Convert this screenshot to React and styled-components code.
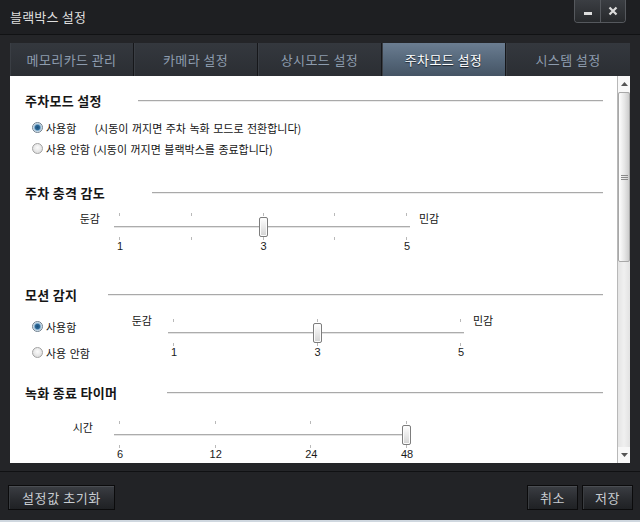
import React from 'react';
import styled, { createGlobalStyle } from 'styled-components';

const Global = createGlobalStyle`
  html, body { margin: 0; padding: 0; background: #242528; }
  body { font-family: "Noto Sans CJK KR", "Noto Sans", sans-serif; }
  #root { width: 640px; height: 522px; }
  * { box-sizing: border-box; }
`;

const Window = styled.div`
  width: 640px;
  height: 522px;
  display: flex;
  flex-direction: column;
  background: #242528;
  overflow: hidden;
`;

const TitleBar = styled.div`
  height: 35px;
  flex: none;
  display: flex;
  align-items: flex-start;
  justify-content: space-between;
  padding: 0 14px 0 10px;
  background: #1e1f22;
  border-bottom: 1px solid #111214;
`;

const Title = styled.div`
  line-height: 33px;
  font-size: 13px;
  color: #dedede;
  letter-spacing: 0.2px;
`;

const WinButtons = styled.div`
  display: flex;
  height: 23px;
  border: 1px solid #55585d;
  border-top: none;
  border-radius: 0 0 4px 4px;
  overflow: hidden;
`;

const WinButton = styled.div`
  width: 25px;
  height: 22px;
  display: flex;
  align-items: center;
  justify-content: center;
  background: linear-gradient(#3b3e43, #27292c);
  border-left: ${p => (p.$first ? 'none' : '1px solid #55585d')};
`;

const Body = styled.div`
  flex: none;
  padding: 8px 10px 8px 10px;
  display: flex;
  flex-direction: column;
`;

const TabBar = styled.div`
  display: grid;
  grid-template-columns: repeat(5, 1fr);
  height: 33px;
`;

const Tab = styled.div`
  display: flex;
  align-items: center;
  justify-content: center;
  font-size: 13px;
  letter-spacing: 0.4px;
  border-right: 1px solid #16171a;
  box-shadow: inset 1px 0 0 #3a3e44;
  color: ${p => (p.$active ? '#ffffff' : '#8d9cae')};
  text-shadow: ${p => (p.$active ? '0 1px 1px #1b232c' : 'none')};
  background: ${p =>
    p.$active
      ? 'linear-gradient(#6b7d91, #56687b 50%, #455464)'
      : 'linear-gradient(#34383e, #2b2e33)'};
  &:last-child { border-right: none; }
`;

const Panel = styled.div`
  height: 387px;
  display: flex;
  background: #ffffff;
`;

const Content = styled.div`
  flex: 1;
  overflow: hidden;
  padding: 15px 14px 0 15px;
  color: #151515;
`;

const Heading = styled.div`
  display: grid;
  grid-template-columns: ${p => p.$col}px 1fr;
  align-items: center;
  height: 18px;
  margin-top: ${p => p.$mt || 0}px;
`;

const HeadingText = styled.span`
  font-size: 13px;
  font-weight: 700;
  color: #161616;
  letter-spacing: 0.3px;
  white-space: nowrap;
`;

const Rule = styled.div`
  height: 2px;
  border-top: 1px solid #a9a9a9;
  border-bottom: 1px solid #ececec;
`;

const RadioGroup = styled.div`
  display: flex;
  flex-direction: column;
  gap: ${p => p.$gap || 0}px;
  margin-top: ${p => p.$mt || 0}px;
  width: ${p => (p.$width ? `${p.$width}px` : 'auto')};
  flex: none;
`;

const RadioRow = styled.div`
  display: flex;
  align-items: center;
  height: 21px;
  padding-left: 7px;
  font-size: 11px;
  word-spacing: 1px;
  white-space: nowrap;
`;

const RadioDot = styled.span`
  width: 11px;
  height: 11px;
  flex: none;
  border-radius: 50%;
  border: 1px solid ${p => (p.$on ? '#6e7f8e' : '#a2a2a2')};
  margin-right: 3px;
  background: ${p =>
    p.$on
      ? 'radial-gradient(circle, #1d4f7a 0, #2c6896 2.2px, #8fb6d3 3.2px, #e9f0f6 4.5px)'
      : 'radial-gradient(circle at 50% 40%, #fbfbfb, #d5d5d5)'};
`;

const Desc = styled.span`
  margin-left: ${p => p.$gap}px;
`;

const MotionRow = styled.div`
  display: flex;
  align-items: flex-start;
  margin-top: 13px;
`;

const SliderRow = styled.div`
  display: flex;
  align-items: flex-start;
  margin-top: ${p => p.$mt || 0}px;
  font-size: 11px;
`;

const SideLabel = styled.div`
  width: ${p => (p.$width ? `${p.$width}px` : 'auto')};
  flex: none;
  text-align: right;
  line-height: 14px;
  margin-top: ${p => p.$top}px;
  margin-right: ${p => p.$mr || 0}px;
  margin-left: ${p => p.$ml || 0}px;
  white-space: nowrap;
`;

const TrackBox = styled.div`
  position: relative;
  width: ${p => p.$width}px;
  height: 42px;
  flex: none;
`;

const TrackLine = styled.div`
  position: absolute;
  left: 0;
  right: 0;
  top: 14px;
  height: 2px;
  border-top: 1px solid #acacac;
  border-bottom: 1px solid #e3e3e3;
`;

const Tick = styled.div`
  position: absolute;
  width: 1px;
  height: 3px;
  background: #b9b9b9;
  top: ${p => p.$top}px;
`;

const Thumb = styled.div`
  position: absolute;
  top: 5px;
  width: 9px;
  height: 20px;
  margin-left: -4px;
  border: 1px solid #7d7d7d;
  border-radius: 2px;
  background: linear-gradient(#ffffff, #e9e9e9 50%, #d3d3d3);
  box-shadow: inset 0 0 0 1px #fbfbfb;
`;

const Num = styled.div`
  position: absolute;
  top: 28px;
  width: 30px;
  margin-left: -14px;
  text-align: center;
  line-height: 12px;
  font-family: "Liberation Sans", "DejaVu Sans", sans-serif;
  font-size: 11px;
  color: #1a1a1a;
`;

const ScrollBar = styled.div`
  width: 13px;
  flex: none;
  display: flex;
  flex-direction: column;
  background: #ececec;
  border-left: 1px solid #b8b8b8;
`;

const ScrollArrow = styled.div`
  height: 16px;
  flex: none;
  display: flex;
  align-items: center;
  justify-content: center;
  background: #f8f8f8;
`;

const ScrollTrack = styled.div`
  flex: 1;
  display: flex;
  flex-direction: column;
  background: linear-gradient(90deg, #e4e4e4, #f0f0f0 50%, #e2e2e2);
`;

const ScrollThumb = styled.div`
  height: 170px;
  flex: none;
  display: flex;
  align-items: center;
  justify-content: center;
  border: 1px solid #a8a8a8;
  border-radius: 2px;
  background: linear-gradient(90deg, #fefefe, #e6e6e6 55%, #cdcdcd);
`;

const Separator = styled.div`
  height: 1px;
  flex: none;
  background: #101113;
`;

const Footer = styled.div`
  height: 48px;
  flex: none;
  display: flex;
  justify-content: space-between;
  align-items: flex-start;
  padding: 13px 7px 0 8px;
  background: #222326;
`;

const ButtonGroup = styled.div`
  display: flex;
  gap: 4px;
`;

const Button = styled.div`
  width: ${p => p.$width}px;
  height: 25px;
  display: flex;
  align-items: center;
  justify-content: center;
  border: 1px solid #0b0b0c;
  box-shadow: inset 0 1px 0 #4b4e53, inset 1px 0 0 #3a3d41;
  background: linear-gradient(#3b3e43, #2a2c30 55%, #1f2124);
  color: #c8ccd1;
  font-size: 13px;
  letter-spacing: 0.6px;
`;

const BottomStrip = styled.div`
  height: 2px;
  flex: none;
  background: #cfd7df;
`;

function Slider({ label, labelWidth, labelGap, labelTop, right, width, ticks, labels, value }) {
  const span = width - 9;
  const pos = i => 5 + (span * i) / (ticks - 1);
  const idx = Array.from({ length: ticks }, (_, i) => i);
  return (
    <>
      <SideLabel $width={labelWidth} $mr={labelGap} $top={labelTop}>{label}</SideLabel>
      <TrackBox $width={width}>
        <TrackLine />
        {idx.map(i => (
          <Tick key={`t${i}`} $top={1} style={{ left: pos(i) }} />
        ))}
        {idx.map(i => (
          <Tick key={`b${i}`} $top={25} style={{ left: pos(i) }} />
        ))}
        {labels.map(([i, t]) => (
          <Num key={t} style={{ left: pos(i) }}>{t}</Num>
        ))}
        <Thumb style={{ left: pos(value) }} />
      </TrackBox>
      {right && <SideLabel $ml={9} $top={labelTop}>{right}</SideLabel>}
    </>
  );
}

const tabs = ['메모리카드 관리', '카메라 설정', '상시모드 설정', '주차모드 설정', '시스템 설정'];

export default function App() {
  return (
    <Window>
      <Global />
      <TitleBar>
        <Title>블랙박스 설정</Title>
        <WinButtons>
          <WinButton $first>
            <svg width="10" height="10" viewBox="0 0 10 10">
              <rect x="1" y="6" width="8" height="3" fill="#dcdcdc" />
            </svg>
          </WinButton>
          <WinButton>
            <svg width="10" height="10" viewBox="0 0 10 10">
              <path d="M1.5 1.5 L8.5 8.5 M8.5 1.5 L1.5 8.5" stroke="#dcdcdc" strokeWidth="2.2" />
            </svg>
          </WinButton>
        </WinButtons>
      </TitleBar>

      <Body>
        <TabBar>
          {tabs.map((t, i) => (
            <Tab key={t} $active={i === 3}>{t}</Tab>
          ))}
        </TabBar>
        <Panel>
          <Content>
            <Heading $col={113}>
              <HeadingText>주차모드 설정</HeadingText>
              <Rule />
            </Heading>
            <RadioGroup $mt={8}>
              <RadioRow>
                <RadioDot $on />
                사용함<Desc $gap={18}>(시동이 꺼지면 주차 녹화 모드로 전환합니다)</Desc>
              </RadioRow>
              <RadioRow>
                <RadioDot />
                사용 안함<Desc $gap={3}>(시동이 꺼지면 블랙박스를 종료합니다)</Desc>
              </RadioRow>
            </RadioGroup>

            <Heading $col={127} $mt={24}>
              <HeadingText>주차 충격 감도</HeadingText>
              <Rule />
            </Heading>
            <SliderRow $mt={11}>
              <Slider
                label="둔감"
                labelWidth={75}
                labelGap={14}
                labelTop={-1}
                right="민감"
                width={296}
                ticks={5}
                labels={[[0, '1'], [2, '3'], [4, '5']]}
                value={2}
              />
            </SliderRow>

            <Heading $col={83} $mt={31}>
              <HeadingText>모션 감지</HeadingText>
              <Rule />
            </Heading>
            <MotionRow>
              <RadioGroup $gap={5} $width={103}>
                <RadioRow>
                  <RadioDot $on />
                  사용함
                </RadioRow>
                <RadioRow>
                  <RadioDot />
                  사용 안함
                </RadioRow>
              </RadioGroup>
              <SliderRow $mt={2}>
                <Slider
                  label="둔감"
                  labelWidth={24}
                  labelGap={16}
                  labelTop={-5}
                  right="민감"
                  width={296}
                  ticks={3}
                  labels={[[0, '1'], [1, '3'], [2, '5']]}
                  value={1}
                />
              </SliderRow>
            </MotionRow>

            <Heading $col={142} $mt={20}>
              <HeadingText>녹화 종료 타이머</HeadingText>
              <Rule />
            </Heading>
            <SliderRow $mt={19}>
              <Slider
                label="시간"
                labelWidth={68}
                labelGap={21}
                labelTop={0}
                width={296}
                ticks={4}
                labels={[[0, '6'], [1, '12'], [2, '24'], [3, '48']]}
                value={3}
              />
            </SliderRow>
          </Content>
          <ScrollBar>
            <ScrollArrow>
              <svg width="7" height="4" viewBox="0 0 7 4">
                <path d="M0 4 L3.5 0 L7 4 Z" fill="#555" />
              </svg>
            </ScrollArrow>
            <ScrollTrack>
              <ScrollThumb>
                <svg width="7" height="7" viewBox="0 0 7 7">
                  <path d="M0 1.5 H7 M0 3.5 H7 M0 5.5 H7" stroke="#8a8a8a" strokeWidth="1" />
                </svg>
              </ScrollThumb>
            </ScrollTrack>
            <ScrollArrow>
              <svg width="7" height="4" viewBox="0 0 7 4">
                <path d="M0 0 L7 0 L3.5 4 Z" fill="#555" />
              </svg>
            </ScrollArrow>
          </ScrollBar>
        </Panel>
      </Body>

      <Separator />
      <Footer>
        <Button $width={107}>설정값 초기화</Button>
        <ButtonGroup>
          <Button $width={51}>취소</Button>
          <Button $width={51}>저장</Button>
        </ButtonGroup>
      </Footer>
      <BottomStrip />
    </Window>
  );
}
